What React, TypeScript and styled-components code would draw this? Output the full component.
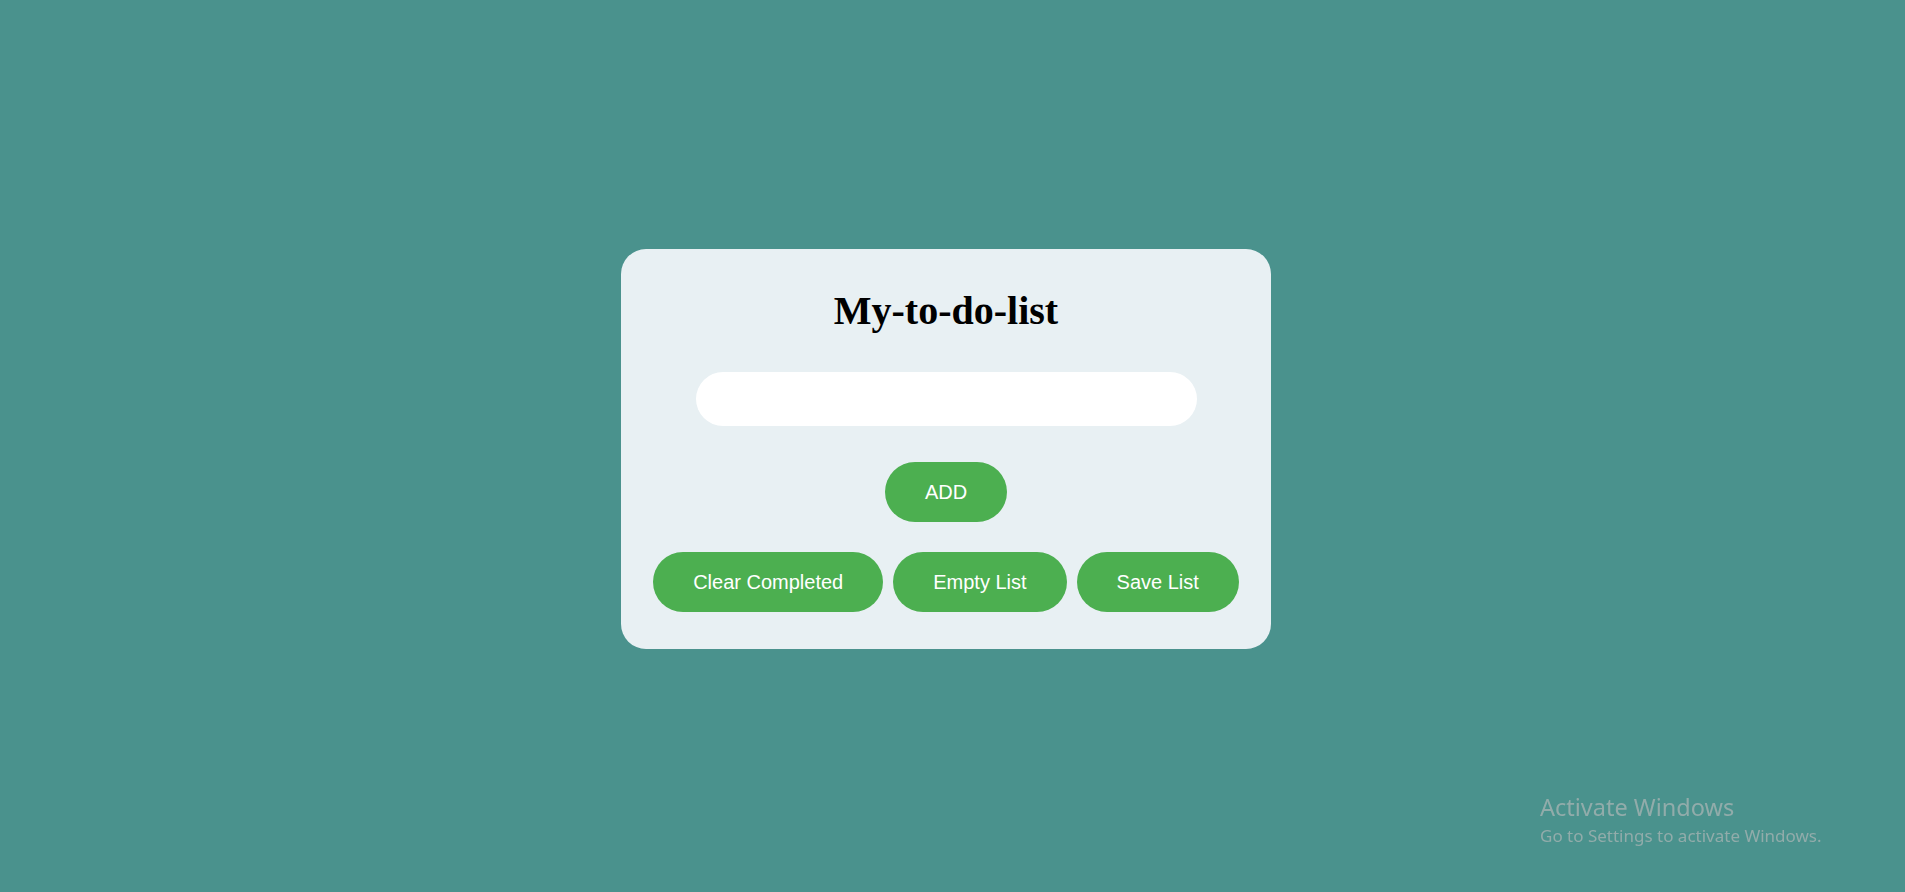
import React, { useState } from "react";
import styled, { createGlobalStyle } from "styled-components";

const GlobalStyle = createGlobalStyle`
  html, body {
    margin: 0;
    padding: 0;
    background: #4a928d;
  }
  * { box-sizing: border-box; }
`;

const Page = styled.div`
  min-height: 100vh;
  display: flex;
  align-items: center;
  justify-content: center;
  padding: 6px 13px 0 0;
`;

const Card = styled.div`
  width: 650px;
  background: #e8f0f3;
  border-radius: 25px;
  padding: 40px 0 37px;
  display: flex;
  flex-direction: column;
  align-items: center;
`;

const Title = styled.h1`
  margin: 0;
  font-family: "Liberation Serif", "Times New Roman", serif;
  font-size: 40px;
  font-weight: bold;
  color: #000;
  line-height: 44px;
`;

const TaskInput = styled.input`
  margin-top: 39px;
  width: 501px;
  height: 54px;
  border: none;
  outline: none;
  border-radius: 27px;
  background: #fff;
  padding: 0 24px;
  font-family: "Liberation Sans", Arial, sans-serif;
  font-size: 18px;
`;

const Button = styled.button`
  border: none;
  border-radius: 30px;
  background: #4caf50;
  color: #fff;
  font-family: "Liberation Sans", Arial, sans-serif;
  font-size: 20px;
  line-height: 24px;
  padding: 18px 40px;
  cursor: pointer;
  white-space: nowrap;
`;

const AddButton = styled(Button)`
  margin-top: 36px;
`;

const ActionRow = styled.div`
  margin-top: 30px;
  display: flex;
  gap: 10px;
  justify-content: center;
`;

const Watermark = styled.div`
  position: fixed;
  left: 1540px;
  top: 792px;
  color: rgba(170, 180, 180, 0.75);
  font-family: "Noto Sans", "Open Sans", sans-serif;
  pointer-events: none;
`;

const WatermarkTitle = styled.div`
  font-size: 23.5px;
  line-height: 30px;
`;

const WatermarkSub = styled.div`
  font-size: 17px;
  line-height: 28px;
`;

export default function App() {
  const [text, setText] = useState("");
  return (
    <>
      <GlobalStyle />
      <Page>
        <Card>
          <Title>My-to-do-list</Title>
          <TaskInput value={text} onChange={(e) => setText(e.target.value)} />
          <AddButton>ADD</AddButton>
          <ActionRow>
            <Button>Clear Completed</Button>
            <Button>Empty List</Button>
            <Button>Save List</Button>
          </ActionRow>
        </Card>
      </Page>
      <Watermark>
        <WatermarkTitle>Activate Windows</WatermarkTitle>
        <WatermarkSub>Go to Settings to activate Windows.</WatermarkSub>
      </Watermark>
    </>
  );
}
